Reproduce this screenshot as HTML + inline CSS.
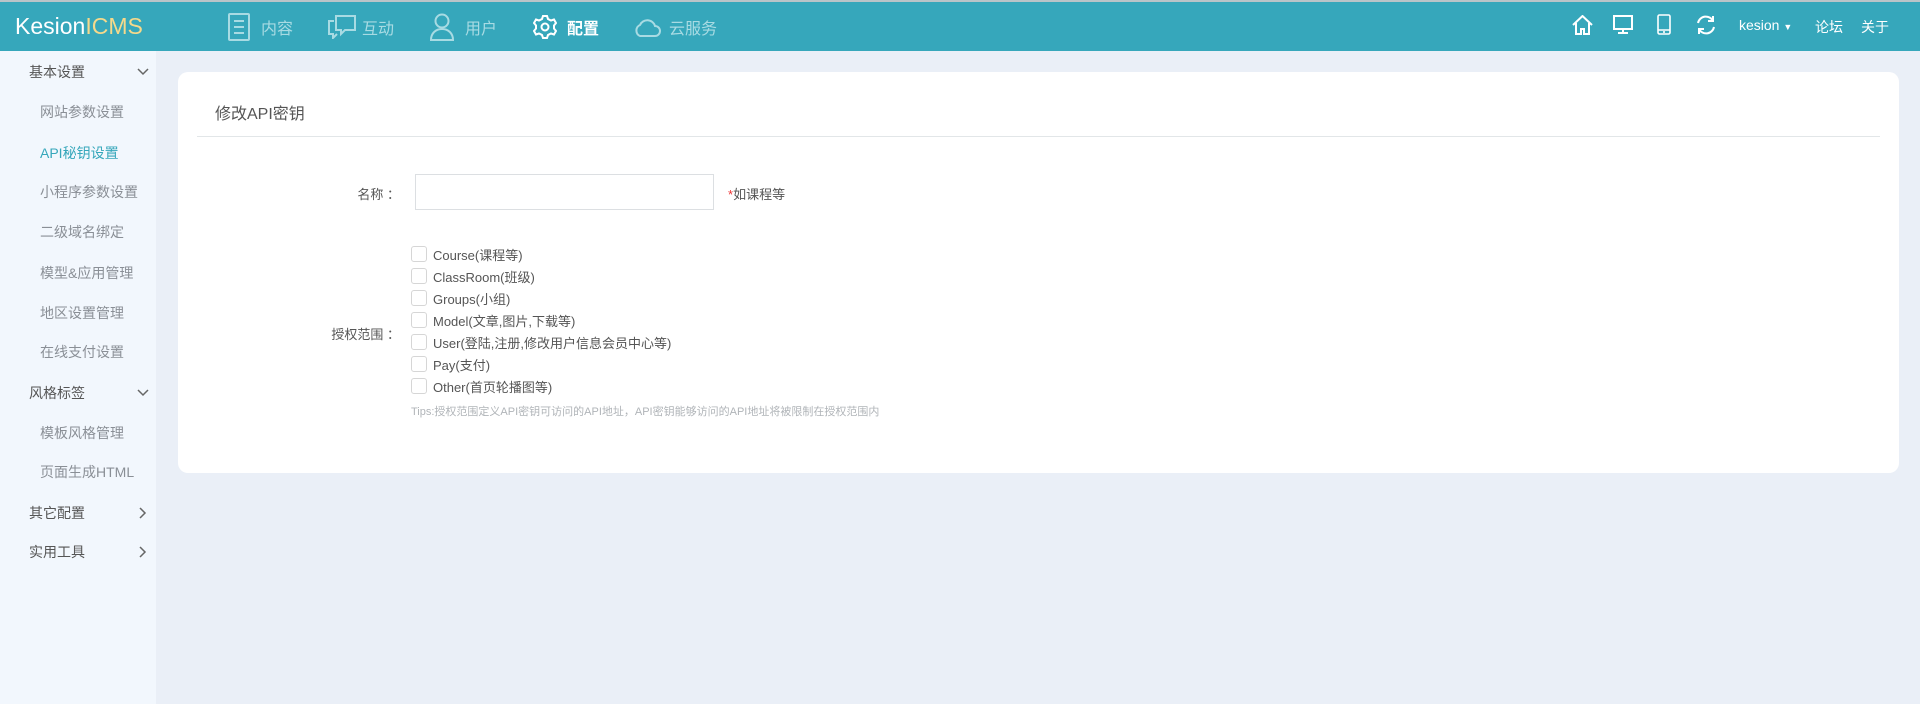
<!DOCTYPE html>
<html><head><meta charset="utf-8"><style>
*{margin:0;padding:0;box-sizing:border-box}
body{width:1920px;height:704px;overflow:hidden;background:#eaeff7;font-family:"Liberation Sans","Noto Sans CJK SC",sans-serif;position:relative}
.hd{position:absolute;left:0;top:0;width:1920px;height:51px;background:#36a7bb;border-top:2px solid #b9c4c8}
.abs{position:absolute}
.logo{left:15px;top:11px;font-size:23px;color:#fff}
.logo span{color:#f5d98b}
.nav{top:13px;font-size:16px;color:#a8dbe3}
.nav.on{color:#fff;font-weight:bold}
.rt{top:15px;font-size:14px;color:#fff}
.sb{position:absolute;left:0;top:51px;width:156px;height:653px;background:#f2f7fd}
.si{position:absolute;font-size:14px;color:#8a8f96}
.sg{position:absolute;font-size:14px;color:#555;left:29px}
.chev{position:absolute;left:137px}
.card{position:absolute;left:178px;top:72px;width:1721px;height:401px;background:#fff;border-radius:10px}
.t{font-size:13px;color:#555}
.cb{position:absolute;left:411px;width:16px;height:16px;border:1px solid #d6d6d6;border-radius:3px;background:#fff}
.cl{position:absolute;left:433px;font-size:13px;color:#555}
</style></head><body>
<div class="hd">
<div class="abs logo">Kesion<span>ICMS</span></div>
<svg class="abs" style="left:228px;top:11px" width="22" height="28" viewBox="0 0 22 28" fill="none" stroke="#a8dbe3" stroke-width="2"><rect x="1" y="1" width="20" height="26" rx="1"/><path d="M6 8h10M6 14h10M6 20h10"/></svg>
<div class="abs nav" style="left:261px">内容</div>
<svg class="abs" style="left:328px;top:13px" width="28" height="24" viewBox="0 0 28 24" fill="none" stroke="#a8dbe3" stroke-width="2"><path d="M8 1h19v14H17l-4 4v-4H8z"/><path d="M6 6H1v13h4v4l4-4"/></svg>
<div class="abs nav" style="left:362px">互动</div>
<svg class="abs" style="left:430px;top:11px" width="24" height="28" viewBox="0 0 24 28" fill="none" stroke="#a8dbe3" stroke-width="2"><circle cx="12" cy="8" r="6.5"/><path d="M1 27c0-7 5-11 11-11s11 4 11 11z"/></svg>
<div class="abs nav" style="left:465px">用户</div>
<svg class="abs" style="left:533px;top:12px" width="24" height="26" viewBox="0 0 24 24" fill="none" stroke="#fff" stroke-width="2"><path d="M10 1h4l1 3 3 1.5 3-1 2 3.5-2 2.5v3l2 2.5-2 3.5-3-1-3 1.5-1 3h-4l-1-3-3-1.5-3 1-2-3.5 2-2.5v-3l-2-2.5 2-3.5 3 1L9 4z"/><circle cx="12" cy="12" r="3.5"/></svg>
<div class="abs nav on" style="left:567px">配置</div>
<svg class="abs" style="left:633px;top:15px" width="28" height="20" viewBox="0 0 28 20" fill="none" stroke="#a8dbe3" stroke-width="2"><path d="M7 19h15a5 5 0 0 0 0-10 8 8 0 0 0-15-1 6 6 0 0 0 0 11z"/></svg>
<div class="abs nav" style="left:669px">云服务</div>
<svg class="abs" style="left:1572px;top:13px" width="21" height="20" viewBox="0 0 21 20" fill="none" stroke="#fff" stroke-width="2"><path d="M1 10L10.5 1 20 10M4 8v11h5v-5h3v5h5V8"/></svg>
<svg class="abs" style="left:1613px;top:13px" width="20" height="19" viewBox="0 0 20 19" fill="none" stroke="#fff" stroke-width="2"><rect x="1" y="1" width="18" height="13"/><path d="M10 14v3M5 18h10"/></svg>
<svg class="abs" style="left:1657px;top:12px" width="14" height="21" viewBox="0 0 14 21" fill="none" stroke="#fff" stroke-width="1.6"><rect x="1" y="1" width="12" height="19" rx="1.5"/><path d="M1 16h12M7 17v2"/></svg>
<svg class="abs" style="left:1695px;top:12px" width="22" height="22" viewBox="0 0 22 22" fill="none" stroke="#fff" stroke-width="2"><path d="M3 9a8 8 0 0 1 15-2M19 13a8 8 0 0 1-15 2"/><path d="M18 2v5h-5M4 20v-5h5"/></svg>
<div class="abs rt" style="left:1739px">kesion <span style="font-size:9px">▼</span></div>
<div class="abs rt" style="left:1815px">论坛</div>
<div class="abs rt" style="left:1861px">关于</div>
</div>
<div class="sb"></div>
<div class="sg" style="top:62px">基本设置</div>
<svg class="chev" style="top:68px" width="12" height="8" viewBox="0 0 12 8" fill="none" stroke="#666" stroke-width="1.5"><path d="M1 1l5 5 5-5"/></svg>
<div class="si" style="left:40px;top:102px">网站参数设置</div>
<div class="si" style="left:40px;top:143px;color:#36a7bb">API秘钥设置</div>
<div class="si" style="left:40px;top:182px">小程序参数设置</div>
<div class="si" style="left:40px;top:222px">二级域名绑定</div>
<div class="si" style="left:40px;top:263px">模型&amp;应用管理</div>
<div class="si" style="left:40px;top:303px">地区设置管理</div>
<div class="si" style="left:40px;top:342px">在线支付设置</div>
<div class="sg" style="top:383px">风格标签</div>
<svg class="chev" style="top:389px" width="12" height="8" viewBox="0 0 12 8" fill="none" stroke="#666" stroke-width="1.5"><path d="M1 1l5 5 5-5"/></svg>
<div class="si" style="left:40px;top:423px">模板风格管理</div>
<div class="si" style="left:40px;top:462px">页面生成HTML</div>
<div class="sg" style="top:503px">其它配置</div>
<svg class="chev" style="top:507px;left:139px" width="8" height="12" viewBox="0 0 8 12" fill="none" stroke="#666" stroke-width="1.5"><path d="M1 1l5 5-5 5"/></svg>
<div class="sg" style="top:542px">实用工具</div>
<svg class="chev" style="top:546px;left:139px" width="8" height="12" viewBox="0 0 8 12" fill="none" stroke="#666" stroke-width="1.5"><path d="M1 1l5 5-5 5"/></svg>
<div class="card"></div>
<div class="abs" style="left:215px;top:100px;font-size:16px;color:#555">修改API密钥</div>
<div class="abs" style="left:197px;top:136px;width:1683px;height:1px;background:#e2e6e8"></div>
<div class="abs t" style="left:330px;top:184px;width:70px;text-align:right">名称 ：</div>
<div class="abs" style="left:415px;top:174px;width:299px;height:36px;border:1px solid #dcdfe2"></div>
<div class="abs t" style="left:728px;top:184px"><span style="color:#e33">*</span>如课程等</div>
<div class="abs t" style="left:310px;top:324px;width:90px;text-align:right">授权范围 ：</div>
<div class="cb" style="top:246px"></div><div class="cl" style="top:245px">Course(课程等)</div>
<div class="cb" style="top:268px"></div><div class="cl" style="top:267px">ClassRoom(班级)</div>
<div class="cb" style="top:290px"></div><div class="cl" style="top:289px">Groups(小组)</div>
<div class="cb" style="top:312px"></div><div class="cl" style="top:311px">Model(文章,图片,下载等)</div>
<div class="cb" style="top:334px"></div><div class="cl" style="top:333px">User(登陆,注册,修改用户信息会员中心等)</div>
<div class="cb" style="top:356px"></div><div class="cl" style="top:355px">Pay(支付)</div>
<div class="cb" style="top:378px"></div><div class="cl" style="top:377px">Other(首页轮播图等)</div>
<div class="abs" style="left:411px;top:403px;font-size:11px;color:#b0b4b8">Tips:授权范围定义API密钥可访问的API地址，API密钥能够访问的API地址将被限制在授权范围内</div>
</body></html>
